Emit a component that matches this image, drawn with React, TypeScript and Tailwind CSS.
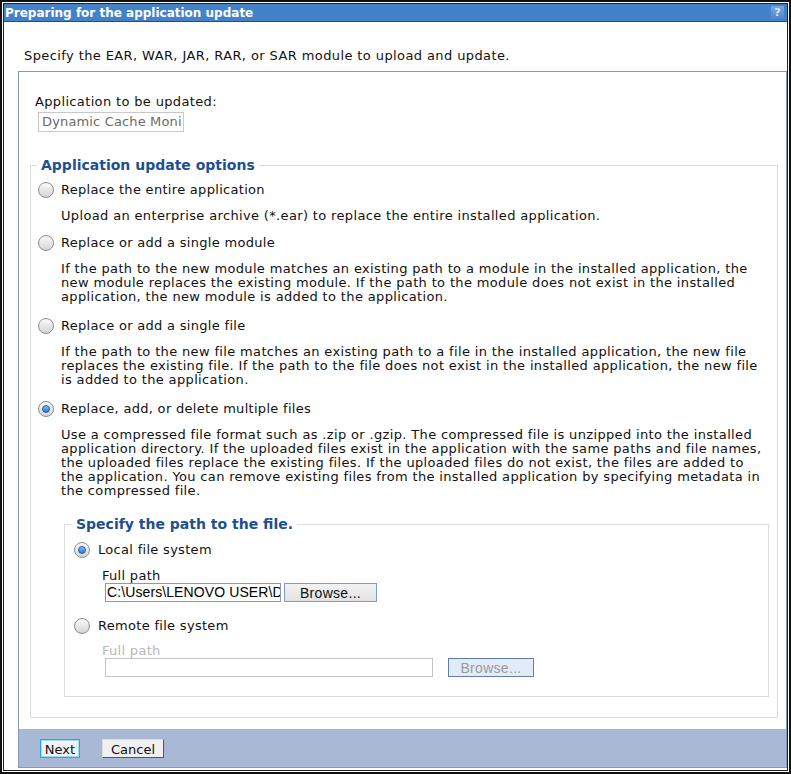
import React from "react";

const Radio = ({ checked = false }: { checked?: boolean }) => (
  <span className="relative flex h-[16px] w-[16px] shrink-0 items-center justify-center rounded-full border border-[#8c8c8c] bg-linear-to-b from-[#fbfbfb] to-[#d4d4d4]">
    {checked && (
      <span className="h-[8px] w-[8px] rounded-full border border-[#1a5fae] bg-linear-to-b from-[#7cc0f5] to-[#2a7ad0]" />
    )}
  </span>
);

const Option = ({
  label,
  checked,
  lines,
  className,
}: {
  label: string;
  checked?: boolean;
  lines: string[];
  className: string;
}) => (
  <div className={className}>
    <div className="flex h-[18px] items-center gap-[7px] pl-[7px]">
      <Radio checked={checked} />
      <span className="text-[13px] tracking-[0.3px] text-[#111]">{label}</span>
    </div>
    <p className="mt-[10px] ml-[30px] whitespace-nowrap text-[13px] leading-[14px] tracking-[0.35px] text-[#111]">
      {lines.map((l, i) => (
        <span key={i} className="block">
          {l}
        </span>
      ))}
    </p>
  </div>
);

export default function App() {
  return (
    <div className="h-[774px] w-[791px] border-2 border-[#111] bg-white p-px font-['DejaVu_Sans',Verdana,sans-serif]">
      <div className="flex h-full flex-col border border-[#222]">
        <div className="flex h-[18px] shrink-0 items-center justify-between border-b border-[#2a4d7a] bg-[#4381c9] pl-px pr-[3px]">
          <span className="text-[12px] font-bold text-white">Preparing for the application update</span>
          <span className="flex h-[13px] w-[13px] items-center justify-center bg-linear-to-b from-[#7aa6dc] to-[#4f86cc] text-[11px] font-bold leading-none text-[#dce8f7]">
            ?
          </span>
        </div>

        <p className="pt-[26px] pl-[20px] text-[13px] leading-[16px] tracking-[0.4px] text-[#111]">
          Specify the EAR, WAR, JAR, RAR, or SAR module to upload and update.
        </p>

        <div className="mt-[7px] ml-[14px] mb-[2px] flex flex-1 flex-col border-t border-r border-b border-l border-[#7f9db9]">
          <div className="flex-1">
            <p className="pt-[22px] pl-[16px] text-[13px] leading-[16px] tracking-[0.35px] text-[#111]">
              Application to be updated:
            </p>
            <div className="mt-[2px] ml-[19px] h-[20px] w-[146px] overflow-hidden border border-[#c8c8c8] pl-[3px] text-[13px] leading-[18px] tracking-[0.15px] whitespace-nowrap text-[#6a6a6a]">
              Dynamic Cache Moni
            </div>

            <fieldset className="mt-[25px] mr-[8px] ml-[11px] border border-[#dcdcdc] pb-[20px]">
              <legend className="ml-[6px] px-[4px] text-[14px] leading-[16px] font-bold text-[#1d4f91]">
                Application update options
              </legend>

              <Option
                className="mt-[8px]"
                label="Replace the entire application"
                lines={["Upload an enterprise archive (*.ear) to replace the entire installed application."]}
              />
              <Option
                className="mt-[11px]"
                label="Replace or add a single module"
                lines={[
                  "If the path to the new module matches an existing path to a module in the installed application, the",
                  "new module replaces the existing module. If the path to the module does not exist in the installed",
                  "application, the new module is added to the application.",
                ]}
              />
              <Option
                className="mt-[13px]"
                label="Replace or add a single file"
                lines={[
                  "If the path to the new file matches an existing path to a file in the installed application, the new file",
                  "replaces the existing file. If the path to the file does not exist in the installed application, the new file",
                  "is added to the application.",
                ]}
              />
              <Option
                className="mt-[13px]"
                checked
                label="Replace, add, or delete multiple files"
                lines={[
                  "Use a compressed file format such as .zip or .gzip. The compressed file is unzipped into the installed",
                  "application directory. If the uploaded files exist in the application with the same paths and file names,",
                  "the uploaded files replace the existing files. If the uploaded files do not exist, the files are added to",
                  "the application. You can remove existing files from the installed application by specifying metadata in",
                  "the compressed file.",
                ]}
              />

              <fieldset className="mt-[18px] mr-[8px] ml-[33px] border border-[#dcdcdc] pb-[19px]">
                <legend className="ml-[7px] px-[4px] text-[14px] leading-[16px] font-bold text-[#1d4f91]">
                  Specify the path to the file.
                </legend>

                <div className="mt-[9px] flex h-[18px] items-center gap-[8px] pl-[9px]">
                  <Radio checked />
                  <span className="text-[13px] tracking-[0.3px] text-[#111]">Local file system</span>
                </div>
                <p className="mt-[10px] pl-[37px] text-[13px] leading-[14px] tracking-[0.3px] text-[#111]">Full path</p>
                <div className="flex h-[19px] items-stretch gap-[3px] pl-[40px]">
                  <div className="w-[176px] overflow-hidden border border-[#7f9db9] pl-px font-['Liberation_Sans',Arial,sans-serif] text-[14px] leading-[17px] tracking-[0.1px] whitespace-nowrap text-black">
                    C:\Users\LENOVO USER\D
                  </div>
                  <button className="w-[93px] border border-[#7f9db9] bg-linear-to-b from-[#f2f2f2] to-[#e2e2e2] font-['Liberation_Sans',Arial,sans-serif] text-[14px] leading-[16px] tracking-[0.3px] text-[#111]">
                    Browse...
                  </button>
                </div>

                <div className="mt-[15px] flex h-[18px] items-center gap-[8px] pl-[9px]">
                  <Radio />
                  <span className="text-[13px] tracking-[0.3px] text-[#111]">Remote file system</span>
                </div>
                <p className="mt-[9px] pl-[37px] text-[13px] leading-[14px] tracking-[0.3px] text-[#b8b8b8]">Full path</p>
                <div className="flex h-[19px] items-stretch gap-[15px] pl-[40px]">
                  <div className="w-[328px] border border-[#c4c4c4]" />
                  <button className="w-[86px] border border-[#5f7fb3] bg-[#e3ebf8] font-['Liberation_Sans',Arial,sans-serif] text-[14px] leading-[16px] tracking-[0.3px] text-[#9a9a9a]">
                    Browse...
                  </button>
                </div>
              </fieldset>
            </fieldset>
          </div>

          <div className="flex h-[38px] shrink-0 items-center gap-[22px] bg-[#a8b8d5] pl-[21px]">
            <button className="h-[19px] w-[40px] border border-[#2aa7d8] bg-[#f2f2f2] text-[13px] text-[#111] shadow-[inset_0_0_0_1px_#9fdcf3]">
              Next
            </button>
            <button className="h-[19px] w-[62px] border border-[#555] border-t-[#ddd] border-l-[#ddd] bg-[#f0f0f0] text-[13px] text-[#111]">
              Cancel
            </button>
          </div>
        </div>
      </div>
    </div>
  );
}
